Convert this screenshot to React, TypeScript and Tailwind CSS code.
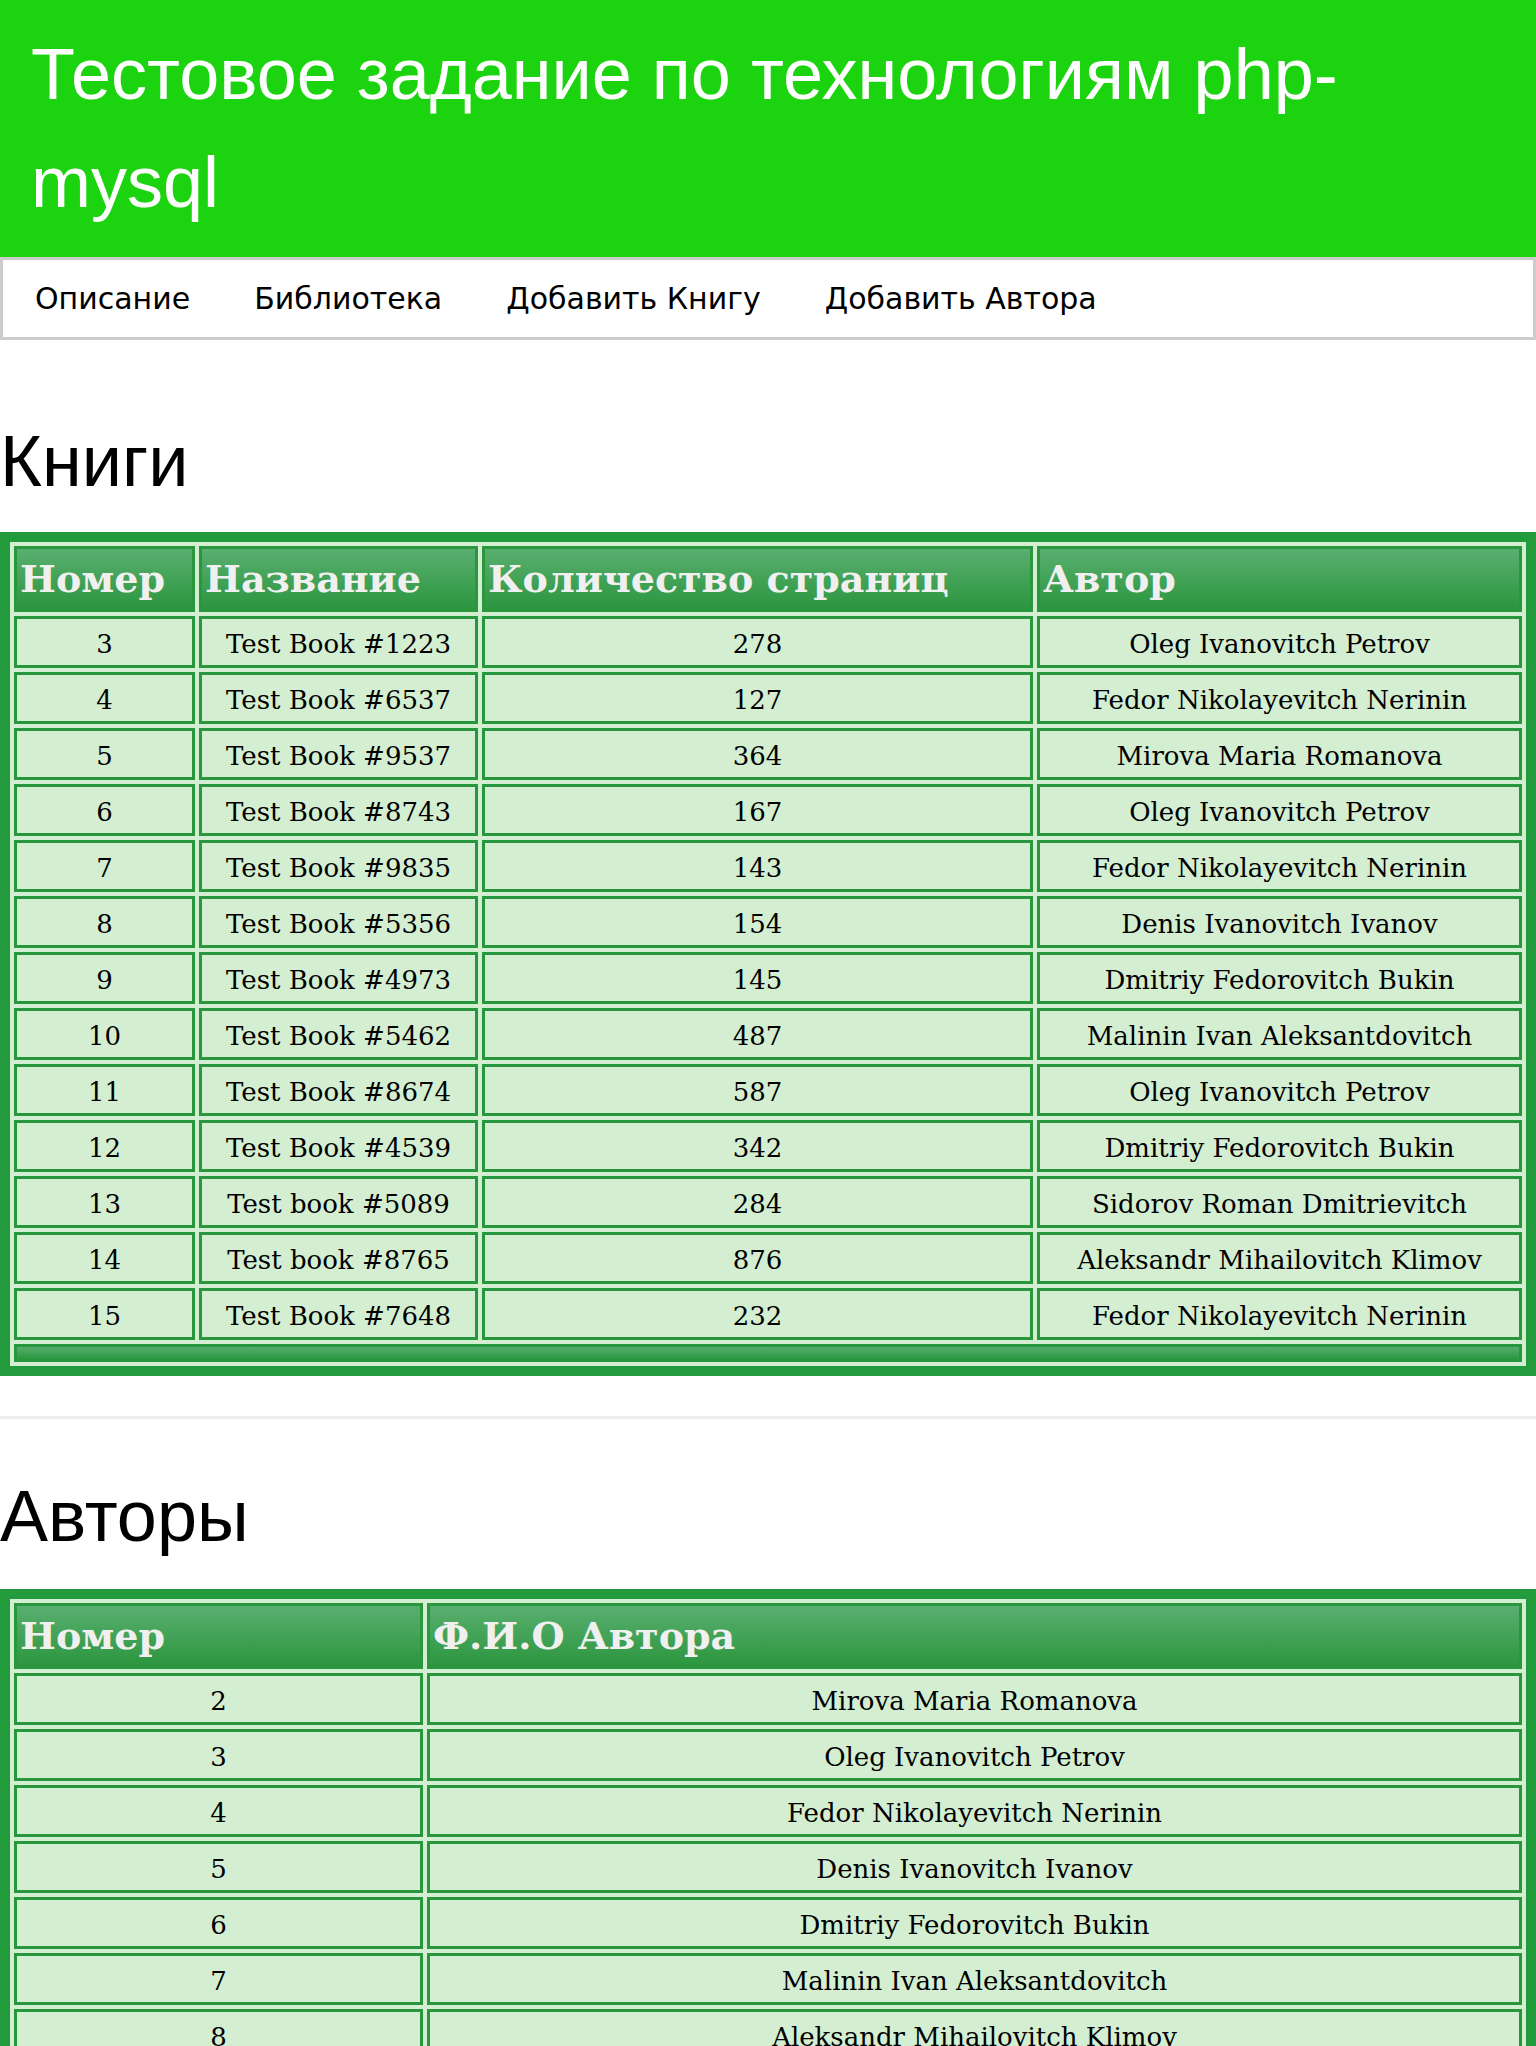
import React from 'react';

const books = [
  { id: 3, title: 'Test Book #1223', pages: 278, author: 'Oleg Ivanovitch Petrov' },
  { id: 4, title: 'Test Book #6537', pages: 127, author: 'Fedor Nikolayevitch Nerinin' },
  { id: 5, title: 'Test Book #9537', pages: 364, author: 'Mirova Maria Romanova' },
  { id: 6, title: 'Test Book #8743', pages: 167, author: 'Oleg Ivanovitch Petrov' },
  { id: 7, title: 'Test Book #9835', pages: 143, author: 'Fedor Nikolayevitch Nerinin' },
  { id: 8, title: 'Test Book #5356', pages: 154, author: 'Denis Ivanovitch Ivanov' },
  { id: 9, title: 'Test Book #4973', pages: 145, author: 'Dmitriy Fedorovitch Bukin' },
  { id: 10, title: 'Test Book #5462', pages: 487, author: 'Malinin Ivan Aleksantdovitch' },
  { id: 11, title: 'Test Book #8674', pages: 587, author: 'Oleg Ivanovitch Petrov' },
  { id: 12, title: 'Test Book #4539', pages: 342, author: 'Dmitriy Fedorovitch Bukin' },
  { id: 13, title: 'Test book #5089', pages: 284, author: 'Sidorov Roman Dmitrievitch' },
  { id: 14, title: 'Test book #8765', pages: 876, author: 'Aleksandr Mihailovitch Klimov' },
  { id: 15, title: 'Test Book #7648', pages: 232, author: 'Fedor Nikolayevitch Nerinin' },
];

const authors = [
  { id: 2, name: 'Mirova Maria Romanova' },
  { id: 3, name: 'Oleg Ivanovitch Petrov' },
  { id: 4, name: 'Fedor Nikolayevitch Nerinin' },
  { id: 5, name: 'Denis Ivanovitch Ivanov' },
  { id: 6, name: 'Dmitriy Fedorovitch Bukin' },
  { id: 7, name: 'Malinin Ivan Aleksantdovitch' },
  { id: 8, name: 'Aleksandr Mihailovitch Klimov' },
  { id: 9, name: 'Sidorov Roman Dmitrievitch' },
];

const navItems = ['Описание', 'Библиотека', 'Добавить Книгу', 'Добавить Автора'];

const th = 'border-[3px] border-[#2a973f] bg-gradient-to-b from-[#58af6f] to-[#2a963e] text-left align-middle px-[3px] py-[8px] text-[38px] leading-[44px] font-bold text-[#f0f0f0]';
const td = 'border-[3px] border-[#28963c] bg-[#d4eed2] text-center pt-[10px] pb-[6px] px-[4px] text-[26px] leading-[30px] text-black font-normal';
const tableCls = 'w-full table-fixed border-separate border-spacing-[4px] border-[10px] border-[#239a3b] bg-[#d4eed2] font-["DejaVu_Serif",serif]';

const App = () => {
  return (
    <div className="min-h-screen bg-white font-['Liberation_Sans',Arial,sans-serif]">
      {/* Header */}
      <header className="bg-[#1cd30f] px-[31px] pt-[20px] pb-[21px]">
        <h1 className="text-white text-[72px] leading-[108px] font-normal">
          Тестовое задание по технологиям php-mysql
        </h1>
      </header>

      {/* Nav */}
      <nav className="border-[3px] border-[#cccccc] bg-white flex font-['DejaVu_Sans',sans-serif]">
        {navItems.map((item) => (
          <a key={item} href="#" className="px-[32px] py-[21px] text-[30px] leading-[35px] text-black">
            {item}
          </a>
        ))}
      </nav>

      {/* Books */}
      <h2 className="mt-[67px] mb-[17px] text-[72px] font-normal text-black leading-normal">Книги</h2>
      <table className={tableCls}>
        <colgroup>
          <col className="w-[181px]" />
          <col className="w-[279px]" />
          <col className="w-[551px]" />
          <col />
        </colgroup>
        <thead>
          <tr>
            <th className={th}>Номер</th>
            <th className={th}>Название</th>
            <th className={th}>Количество страниц</th>
            <th className={th}>Автор</th>
          </tr>
        </thead>
        <tbody>
          {books.map((b) => (
            <tr key={b.id}>
              <td className={td}>{b.id}</td>
              <td className={td}>{b.title}</td>
              <td className={td}>{b.pages}</td>
              <td className={td}>{b.author}</td>
            </tr>
          ))}
        </tbody>
        <tfoot>
          <tr>
            <td colSpan={4} className="h-[18px] p-0 border-[3px] border-[#28963c] bg-gradient-to-b from-[#54ac6b] to-[#2b9740]" />
          </tr>
        </tfoot>
      </table>

      <hr className="mt-[40px] border-0 border-t-[3px] border-[#eeeeee]" />

      {/* Authors */}
      <h2 className="mt-[43px] mb-[19px] text-[72px] font-normal text-black leading-normal">Авторы</h2>
      <table className={tableCls}>
        <colgroup>
          <col className="w-[409px]" />
          <col />
        </colgroup>
        <thead>
          <tr>
            <th className={th}>Номер</th>
            <th className={th}>Ф.И.О Автора</th>
          </tr>
        </thead>
        <tbody>
          {authors.map((a) => (
            <tr key={a.id}>
              <td className={td}>{a.id}</td>
              <td className={td}>{a.name}</td>
            </tr>
          ))}
        </tbody>
        <tfoot>
          <tr>
            <td colSpan={2} className="h-[18px] p-0 border-[3px] border-[#28963c] bg-gradient-to-b from-[#54ac6b] to-[#2b9740]" />
          </tr>
        </tfoot>
      </table>
      <div className="h-[40px]" />
    </div>
  );
};

export default App;
